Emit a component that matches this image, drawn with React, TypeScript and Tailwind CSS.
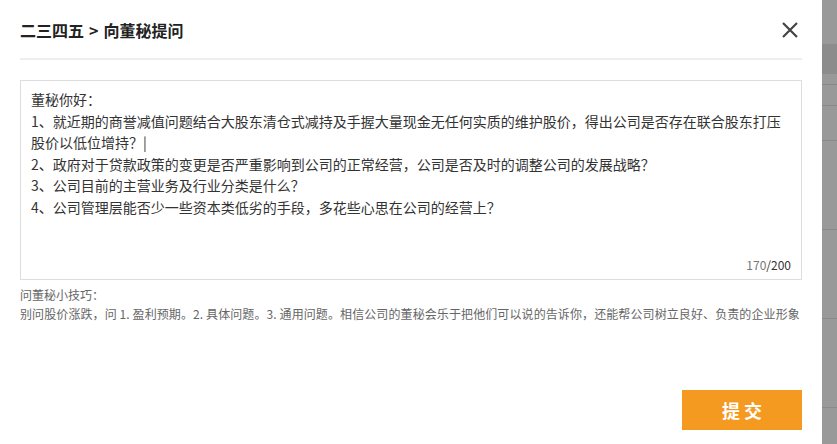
import React from 'react';

const lines = [
  '董秘你好：',
  '1、就近期的商誉减值问题结合大股东清仓式减持及手握大量现金无任何实质的维护股价，得出公司是否存在联合股东打压',
  '股价以低位增持？|',
  '2、政府对于贷款政策的变更是否严重影响到公司的正常经营，公司是否及时的调整公司的发展战略？',
  '3、公司目前的主营业务及行业分类是什么？',
  '4、公司管理层能否少一些资本类低劣的手段，多花些心思在公司的经营上？',
];

const font = { fontFamily: '"Noto Sans CJK SC", "Noto Sans", sans-serif' };

export default function App() {
  return (
    <div className="flex h-[444px] w-[837px] overflow-hidden bg-white" style={font}>
      <div className="flex w-[822px] flex-col px-5">
        {/* header */}
        <div className="flex h-[60px] items-center justify-between border-b-2 border-[#eeeeee] pt-[2px]">
          <h1 className="text-[16px] font-bold leading-none text-[#222]">
            二三四五<span className="mx-[5px]">&gt;</span>向董秘提问
          </h1>
          <button className="mr-[3px] text-[#444]">
            <svg className="h-[18px] w-[18px]" viewBox="0 0 18 18" fill="none">
              <path d="M2 2L16 16M16 2L2 16" stroke="currentColor" strokeWidth="2.2" />
            </svg>
          </button>
        </div>

        {/* question box */}
        <div className="mt-5 flex h-[200px] flex-col border border-[#dddddd] px-[10px] pt-[8px] pb-[4px]">
          <div className="flex-1 text-[14px] leading-[21.5px] text-[#333]">
            {lines.map((l, i) => (
              <div key={i} className="whitespace-nowrap">{l}</div>
            ))}
          </div>
          <div className="text-right text-[12px] leading-[20px]">
            <span className="text-[#777]">170</span>
            <span className="text-[#333]">/200</span>
          </div>
        </div>

        {/* tips */}
        <div className="mt-[5px] text-[12px] leading-[19px] text-[#666]">
          <div>问董秘小技巧：</div>
          <div className="whitespace-nowrap tracking-[0.1px]">
            别问股价涨跌，问 1. 盈利预期。2. 具体问题。3. 通用问题。相信公司的董秘会乐于把他们可以说的告诉你，还能帮公司树立良好、负责的企业形象
          </div>
        </div>

        <div className="mt-auto mb-[14px] flex justify-end">
          <button className="h-[40px] w-[120px] bg-[#f49a20] text-[18px] font-bold text-white">提 交</button>
        </div>
      </div>

      {/* backdrop strip */}
      <div className="flex flex-1 flex-col bg-[#999999]">
        <div className="h-[44px]" />
        <div className="h-[30px] bg-[#8c8c8c]" />
        <div className="h-[10px]" />
        <div className="h-[21px] border-t border-[#888]" />
        <div className="h-[35px] border-t border-[#888]" />
        <div className="h-[89px] border-t border-[#8a8a8a]" />
        <div className="h-[89px] border-t border-[#8a8a8a]" />
        <div className="h-[89px] border-t border-[#8a8a8a]" />
        <div className="flex-1 border-t border-[#8a8a8a]" />
      </div>
    </div>
  );
}
